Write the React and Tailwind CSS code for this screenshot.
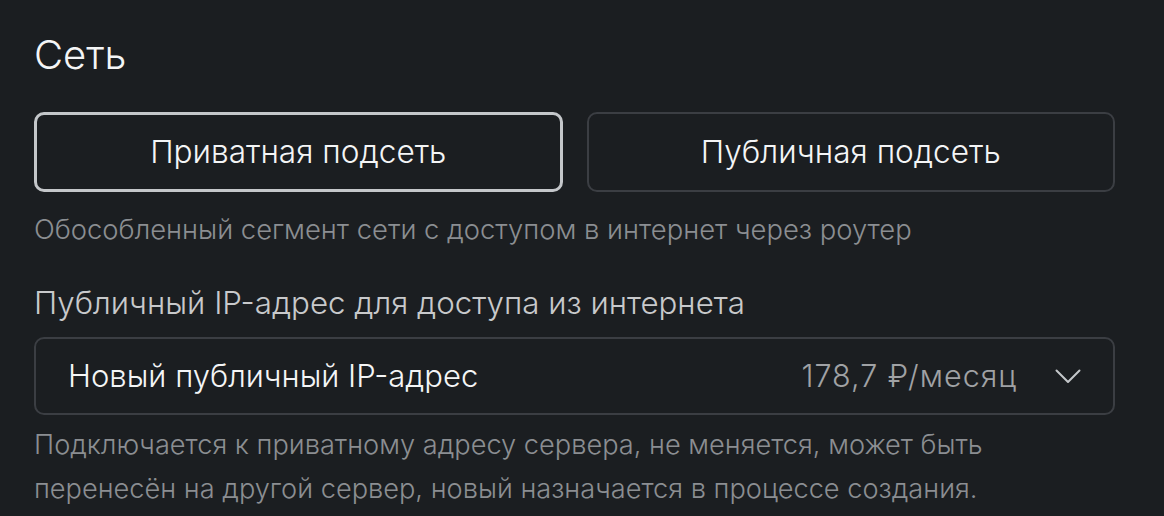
const font = { fontFamily: 'Inter, "Noto Sans", sans-serif' };

export default function App() {
  return (
    <div className="min-h-screen bg-[#1b1e21] pl-[34px] pr-[49px] pt-[31px] text-white font-light" style={font}>
      <h2 className="text-[40px] leading-[48px] font-light text-[#f4f5f6]">Сеть</h2>

      <div className="mt-[33px] grid grid-cols-2 gap-[24px]">
        <button className="h-[80px] rounded-[10px] border-[3px] border-[#c4c7ca] text-[31.6px] font-light text-[#f4f5f6]">
          Приватная подсеть
        </button>
        <button className="h-[80px] rounded-[10px] border-2 border-[#3b3e43] text-[31.6px] font-light text-[#f4f5f6]">
          Публичная подсеть
        </button>
      </div>

      <p className="mt-[17px] text-[27.4px] leading-[40px] text-[#8b8e92]">
        Обособленный сегмент сети с доступом в интернет через роутер
      </p>

      <div className="mt-[34px] text-[31.3px] leading-[40px] text-[#c8c9cb]">
        Публичный IP-адрес для доступа из интернета
      </div>

      <div className="mt-[14px] flex h-[78px] items-center rounded-[10px] border-2 border-[#3b3e43] pl-[32px] pr-[32px]">
        <span className="flex-1 text-[31px] leading-[40px] text-[#f4f5f6]">Новый публичный IP-адрес</span>
        <span className="text-[30.5px] leading-[40px] tracking-[1px] text-[#a0a2a5]">178,7 ₽/месяц</span>
        <svg className="ml-[38px]" width="26" height="15" viewBox="0 0 26 15" fill="none">
          <path d="M1.5 1.5 L13 13 L24.5 1.5" stroke="#c4c7ca" strokeWidth="2" strokeLinecap="round" strokeLinejoin="round" />
        </svg>
      </div>

      <p className="mt-[8px] text-[27.2px] leading-[44px] text-[#8b8e92]">
        Подключается к приватному адресу сервера, не меняется, может быть
        <br />
        перенесён на другой сервер, новый назначается в процессе создания.
      </p>
    </div>
  );
}
